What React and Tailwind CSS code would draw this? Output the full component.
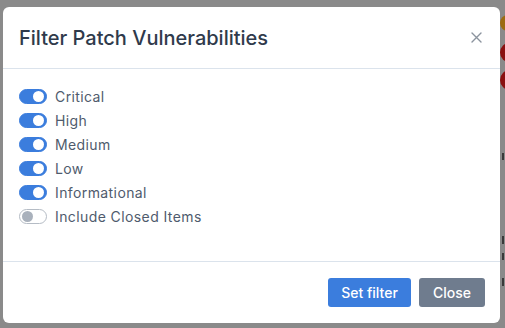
import React from "react";

const FONT = { fontFamily: "Inter, 'Noto Sans', sans-serif" };

const items = [
  { label: "Critical", on: true },
  { label: "High", on: true },
  { label: "Medium", on: true },
  { label: "Low", on: true },
  { label: "Informational", on: true },
  { label: "Include Closed Items", on: false },
];

function Toggle({ on }) {
  return (
    <span
      className={[
        "flex h-[15px] w-[28px] shrink-0 items-center rounded-full border px-[2px]",
        on
          ? "justify-end border-[#3b7ddd] bg-[#3b7ddd]"
          : "justify-start border-[#b5bcc5] bg-white",
      ].join(" ")}
    >
      <span
        className={[
          "block h-[11px] w-[11px] rounded-full",
          on ? "bg-white" : "bg-[#a9b1bc]",
        ].join(" ")}
      />
    </span>
  );
}

export default function App() {
  return (
    <div
      className="relative h-[328px] w-[505px] overflow-hidden bg-[#8a8a8a]"
      style={FONT}
    >
      {/* bits of the page behind the backdrop */}
      <span className="absolute left-[500px] top-[15px] h-[16px] w-[16px] rounded-full bg-[#9c6a12]" />
      <span className="absolute left-[500px] top-[43px] h-[19px] w-[19px] rounded-full bg-[#8a1010]" />
      <span className="absolute left-[500px] top-[70px] h-[20px] w-[20px] rounded-full bg-[#8a1010]" />
      <span className="absolute left-[502px] top-[153px] h-[7px] w-[2px] bg-[#3a3a3a]" />
      <span className="absolute left-[502px] top-[236px] h-[8px] w-[2px] bg-[#3a3a3a]" />
      <span className="absolute left-[502px] top-[253px] h-[7px] w-[2px] bg-[#3a3a3a]" />
      <span className="absolute left-[502px] top-[278px] h-[8px] w-[2px] bg-[#3a3a3a]" />

      <div className="relative ml-[3px] mt-[7px] flex h-[316px] w-[497px] flex-col rounded-[6px] bg-white">
        <div className="flex h-[62px] items-center justify-between border-b border-[#dbe3ec] pl-[16px] pr-[18px]">
          <h1 className="text-[20px] font-medium text-[#2f3a4b]">
            Filter Patch Vulnerabilities
          </h1>
          <svg
            width="11"
            height="11"
            viewBox="0 0 11 11"
            className="text-[#8b939e]"
          >
            <path
              d="M1 1L10 10M10 1L1 10"
              stroke="currentColor"
              strokeWidth="1.4"
              strokeLinecap="round"
            />
          </svg>
        </div>

        <div className="flex flex-1 flex-col gap-[9px] border-b border-[#dbe3ec] pl-[16px] pt-[20px]">
          {items.map((item) => (
            <label key={item.label} className="flex items-center gap-[8px]">
              <Toggle on={item.on} />
              <span className="text-[14px] leading-[15px] tracking-[0.4px] text-[#4f5b6d]">
                {item.label}
              </span>
            </label>
          ))}
        </div>

        <div className="flex h-[61px] items-center justify-end gap-[8px] pr-[15px]">
          <button className="h-[29px] w-[83px] rounded-[3px] bg-[#3b7ddd] text-[14px] font-medium text-white">
            Set filter
          </button>
          <button className="h-[29px] w-[66px] rounded-[3px] bg-[#6f7c8e] text-[14px] font-medium text-white">
            Close
          </button>
        </div>
      </div>
    </div>
  );
}
